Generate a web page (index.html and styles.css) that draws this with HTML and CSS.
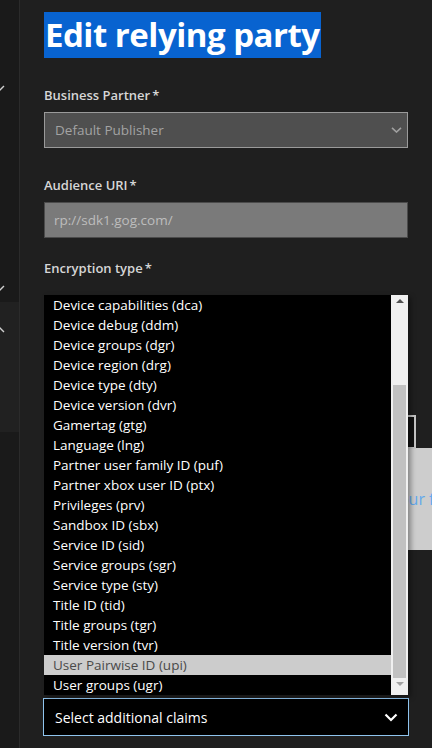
FILE: index.html
```html
<!DOCTYPE html>
<html lang="en">
<head>
<meta charset="utf-8">
<title>Edit relying party</title>
<link rel="stylesheet" href="styles.css">
</head>
<body>
<div class="app">
  <nav class="side">
    <div class="nav-item first"><svg class="chev" width="10" height="6" viewBox="0 0 10 6"><path d="M1 1 L5 5 L9 1" /></svg></div>
    <div class="nav-item second"><svg class="chev" width="10" height="6" viewBox="0 0 10 6"><path d="M1 1 L5 5 L9 1" /></svg></div>
    <div class="nav-item hovered"><svg class="chev" width="10" height="6" viewBox="0 0 10 6"><path d="M1 5 L5 1 L9 5" /></svg></div>
  </nav>
  <main class="content">
    <h1 class="title"><span class="selected">Edit relying party</span></h1>

    <div class="field partner">
      <label class="label">Business Partner<span class="req">*</span></label>
      <div class="select disabled">
        <span>Default Publisher</span>
        <svg width="11" height="6" viewBox="0 0 11 6"><path d="M1 0.8 L5.5 5 L10 0.8" /></svg>
      </div>
    </div>

    <div class="field audience">
      <label class="label">Audience URI<span class="req">*</span></label>
      <div class="input readonly">rp://sdk1.gog.com/</div>
    </div>

    <div class="field encryption">
      <label class="label">Encryption type<span class="req">*</span></label>
      <div class="enc-options"></div>
    </div>

    <div class="actions"><div class="outline-btn"></div></div>
    <div class="feedback"><span class="fb-text">Tell us your feedback</span></div>

    <div class="claims">
      <div class="listbox">
        <ul class="options">
          <li>Device capabilities (dca)</li>
          <li>Device debug (ddm)</li>
          <li>Device groups (dgr)</li>
          <li>Device region (drg)</li>
          <li>Device type (dty)</li>
          <li>Device version (dvr)</li>
          <li>Gamertag (gtg)</li>
          <li>Language (lng)</li>
          <li>Partner user family ID (puf)</li>
          <li>Partner xbox user ID (ptx)</li>
          <li>Privileges (prv)</li>
          <li>Sandbox ID (sbx)</li>
          <li>Service ID (sid)</li>
          <li>Service groups (sgr)</li>
          <li>Service type (sty)</li>
          <li>Title ID (tid)</li>
          <li>Title groups (tgr)</li>
          <li>Title version (tvr)</li>
          <li class="hl">User Pairwise ID (upi)</li>
          <li>User groups (ugr)</li>
        </ul>
        <div class="scrollbar">
          <span class="arrow up"></span>
          <span class="thumb"></span>
          <span class="arrow down"></span>
        </div>
      </div>
      <div class="select focus">
        <span>Select additional claims</span>
        <svg width="14" height="9" viewBox="0 0 14 9"><path d="M1.5 1.5 L7 7 L12.5 1.5" /></svg>
      </div>
    </div>
  </main>
</div>
</body>
</html>
```

FILE: styles.css
```css
* { box-sizing: border-box; }
html, body { margin: 0; padding: 0; }
body {
  background: #1f1f1f;
  font-family: "Open Sans", "Noto Sans", sans-serif;
  overflow: hidden;
  width: 432px;
  height: 748px;
}
.app { display: flex; height: 748px; }

.side {
  width: 20px;
  flex: 0 0 20px;
  background: #1a1a1a;
  border-right: 1px solid #2b2b2b;
  overflow: hidden;
  display: flex;
  flex-direction: column;
  padding-top: 78px;
}
.nav-item { display: flex; align-items: center; height: 20px; }
.nav-item.second { margin-top: 180px; }
.nav-item.hovered {
  margin-top: 4px;
  height: 130px;
  align-items: flex-start;
  padding-top: 25px;
  background: #212121;
}
.chev { margin-left: -5px; display: block; }
.chev path { fill: none; stroke: #d0d0d0; stroke-width: 1.4; }

.content {
  flex: 1;
  padding: 12px 24px 0 24px;
  min-width: 0;
}
.title { margin: 0; line-height: 0; }
.selected {
  display: inline-block;
  background: #0863d0;
  color: #fff;
  font-weight: 700;
  font-size: 33px;
  line-height: 46px;
  height: 46px;
  letter-spacing: -0.5px;
  padding: 0 1px;
}

.field { display: flex; flex-direction: column; }
.label {
  color: #d6d6d6;
  font-weight: 600;
  font-size: 13px;
  line-height: 18px;
  height: 18px;
  margin-bottom: 8px;
}
.req { margin-left: 2px; }
.partner { margin-top: 28px; }
.audience { margin-top: 28px; }
.encryption { margin-top: 21px; }
.enc-options { height: 130px; }

.select, .input {
  height: 36px;
  border: 1px solid #9c9c9c;
  display: flex;
  align-items: center;
  justify-content: space-between;
  padding: 0 10px 0 10px;
  font-size: 13.5px;
}
.select.disabled { background: #4f4f4f; color: #a3a3a3; border-color: #9a9a9a; padding-right: 5px; }
.select.disabled svg path { fill: none; stroke: #a0a0a0; stroke-width: 1.6; }
.input.readonly { background: #7a7a7a; color: #bdbdbd; border-color: #4b4b4b; padding-left: 9px; }

.actions { display: flex; justify-content: flex-end; margin-right: -8px; height: 34px; }
.outline-btn { width: 120px; height: 34px; background: #121212; border: 2px solid #c6c6c6; }
.feedback {
  margin-top: -1px;
  margin-right: -89px;
  height: 102px;
  background: #cdcdcd;
  display: flex;
  align-items: center;
  justify-content: flex-end;
  padding-right: 0;
  font-size: 16px;
  color: #62a9ec;
}

.claims { position: relative; margin-top: 148px; }
.select.focus {
  height: 38px;
  background: #000;
  color: #fff;
  border: 1px solid #8fc4ee;
  margin: 0 -1px;
  padding: 0 10px 0 11px;
  font-size: 14px;
}
.select.focus svg path { fill: none; stroke: #fff; stroke-width: 2.2; }

.listbox {
  position: absolute;
  left: 0; right: 0;
  bottom: calc(100% + 3px);
  height: 400px;
  background: #000;
  display: flex;
  box-shadow: 3px 2px 5px rgba(0,0,0,0.35);
}
.options { list-style: none; margin: 0; padding: 0; flex: 1; }
.options li {
  height: 20px;
  line-height: 20px;
  padding-left: 9px;
  color: #fff;
  font-size: 13.5px;
  white-space: nowrap;
}
.options li.hl { background: #cccccc; color: #4a4a4a; }
.scrollbar {
  position: relative;
  width: 17px;
  flex: 0 0 17px;
  background: #f0f0f0;
}
.arrow {
  position: absolute;
  left: 5px;
  width: 0; height: 0;
  border-left: 4px solid transparent;
  border-right: 4px solid transparent;
}
.arrow.up { top: 4px; border-bottom: 4px solid #505050; }
.arrow.down { bottom: 9px; border-top: 4px solid #a3a3a3; }
.thumb {
  position: absolute;
  left: 2px; right: 2px;
  top: 90px;
  height: 293px;
  background: #c1c1c1;
}
```
